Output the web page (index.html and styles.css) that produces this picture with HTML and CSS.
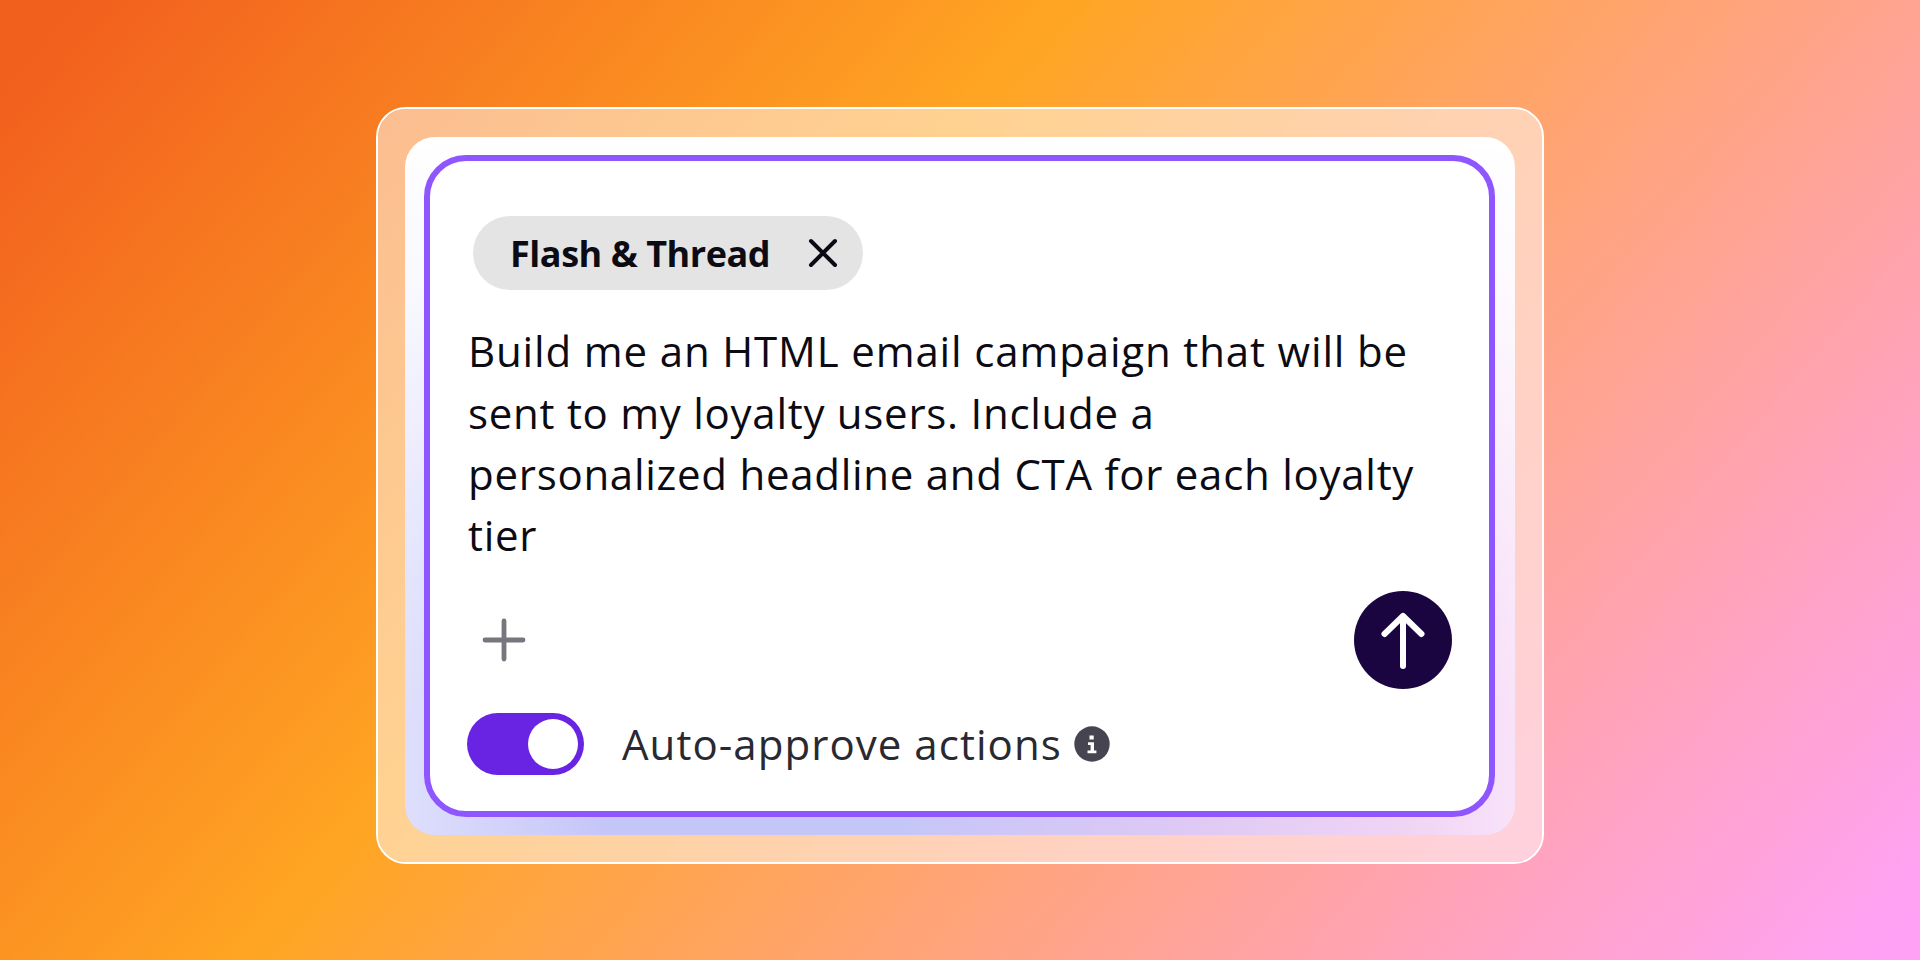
FILE: index.html
```html
<!DOCTYPE html>
<html lang="en">
<head>
    <meta charset="UTF-8">
    <meta name="viewport" content="width=device-width, initial-scale=1.0">
    <title>Campaign prompt</title>

    <link rel="stylesheet" href="styles.css">
</head>
<body>

    <section class="frame">
        <div class="panel">
            <div class="prompt">

                <!-- Selected brand -->
                <div class="chip">
                    <span class="chip-name">Flash &amp; Thread</span>
                    <button class="chip-close" aria-label="Remove">
                        <svg width="30" height="30" viewBox="0 0 30 30">
                            <path d="M3 3L27 27M27 3L3 27"/>
                        </svg>
                    </button>
                </div>

                <!-- Prompt text -->
                <p class="message">
                    <span class="line line-1">Build me an HTML email campaign that will be</span>
                    <span class="line">sent to my loyalty users. Include a</span>
                    <span class="line">personalized headline and CTA for each loyalty</span>
                    <span class="line">tier</span>
                </p>

                <!-- Add and send buttons -->
                <div class="actions">
                    <button class="add" aria-label="Add">
                        <svg width="44" height="44" viewBox="0 0 44 44">
                            <path d="M22 3V41M3 22H41"/>
                        </svg>
                    </button>
                    <button class="send" aria-label="Send">
                        <svg width="98" height="98" viewBox="0 0 98 98">
                            <path d="M49 26V75"/>
                            <path d="M30.5 43L49 25L67.5 43"/>
                        </svg>
                    </button>
                </div>

                <!-- Auto approve switch -->
                <div class="approve">
                    <div class="toggle"><div class="knob"></div></div>
                    <span class="approve-label">Auto-approve actions</span>
                    <svg class="info" width="36" height="36" viewBox="0 0 36 36">
                        <circle cx="18" cy="18" r="17.7"/>
                        <path d="M15.5 9.5h4.2v4h-4.2zM14 16.2h6v8.3h2.4v2.7h-8.9v-2.7h3.1v-5.6H14z"/>
                    </svg>
                </div>

            </div>
        </div>
    </section>

</body>
</html>
```
FILE: styles.css
```css
*{
    padding: 0;
    margin: 0;
    box-sizing: border-box;
}

body{
    display: flex;
    justify-content: center;
    width: 100vw;
    height: 100vh;
    padding-top: 107px;
    overflow: hidden;
    font-family: "Open Sans", sans-serif;
    background: linear-gradient(130.5deg, #f2601e 3%, #ffa523 39%, #ffa2f5 98%);
}

button{
    display: flex;
    border: none;
    background: none;
    cursor: pointer;
}

svg path{
    fill: none;
    stroke-linecap: round;
    stroke-linejoin: round;
}

/* Translucent frame around the panel */
.frame{
    width: 1168px;
    height: 757px;
    padding: 28px 27px 27px;
    border: 2px solid #fff;
    border-radius: 30px;
    background: rgba(255, 255, 255, 0.5);
    background-clip: padding-box;
}

.panel{
    height: 698px;
    padding: 18px 20px 18px 19px;
    border-radius: 30px;
    background:
        linear-gradient(to bottom, #fff 0%, rgba(255, 255, 255, 0.8) 22%, rgba(255, 255, 255, 0.2) 62%, rgba(255, 255, 255, 0) 85%),
        linear-gradient(to right, #dedefc 0%, #c5c6f8 18%, #c5c6f8 45%, #dcc8f4 68%, #f0d4f4 90%, #f8e2f9 100%);
}

.prompt{
    height: 662px;
    padding: 55px 37px 0 37px;
    border: 6px solid #8f55ff;
    border-radius: 42px;
    background: #fff;
}

/* Brand chip */
.chip{
    display: flex;
    align-items: center;
    justify-content: space-between;
    width: 390px;
    height: 74px;
    margin-left: 6px;
    padding: 0 25px 0 37px;
    border-radius: 37px;
    background: #e4e4e4;
}

.chip-name{
    padding-top: 1px;
    font-size: 36px;
    font-weight: 700;
    line-height: 73px;
    letter-spacing: -0.45px;
    white-space: nowrap;
    color: #0c0b14;
}

.chip-close path{
    stroke: #0c0b14;
    stroke-width: 4;
}

/* Prompt text */
.message{
    margin-top: 30.4px;
    padding-left: 1px;
    font-size: 42px;
    line-height: 61.2px;
    letter-spacing: 0.73px;
    color: #0c0b14;
}

.line{
    display: block;
    white-space: nowrap;
}

.line-1{
    letter-spacing: 0.85px;
}

/* Add and send row */
.actions{
    display: flex;
    align-items: center;
    justify-content: space-between;
    margin-top: 25.6px;
    padding-left: 15px;
}

.add path{
    stroke: #77757d;
    stroke-width: 4.8;
}

.send{
    border-radius: 50%;
    background: #1a0540;
}

.send path{
    stroke: #fff;
    stroke-width: 6;
}

/* Auto approve row */
.approve{
    display: flex;
    align-items: center;
    margin-top: 24px;
}

.toggle{
    display: flex;
    align-items: center;
    justify-content: flex-end;
    width: 117px;
    height: 62px;
    padding-right: 6px;
    border-radius: 31px;
    background: #6824e2;
}

.knob{
    width: 50px;
    height: 50px;
    border-radius: 50%;
    background: #fff;
}

.approve-label{
    margin-left: 38px;
    font-size: 42px;
    line-height: 62px;
    letter-spacing: 1.05px;
    white-space: nowrap;
    color: #2a2932;
}

.info{
    margin-left: 12px;
}

.info circle{
    fill: #464450;
}

.info path{
    fill: #fff;
}
```
